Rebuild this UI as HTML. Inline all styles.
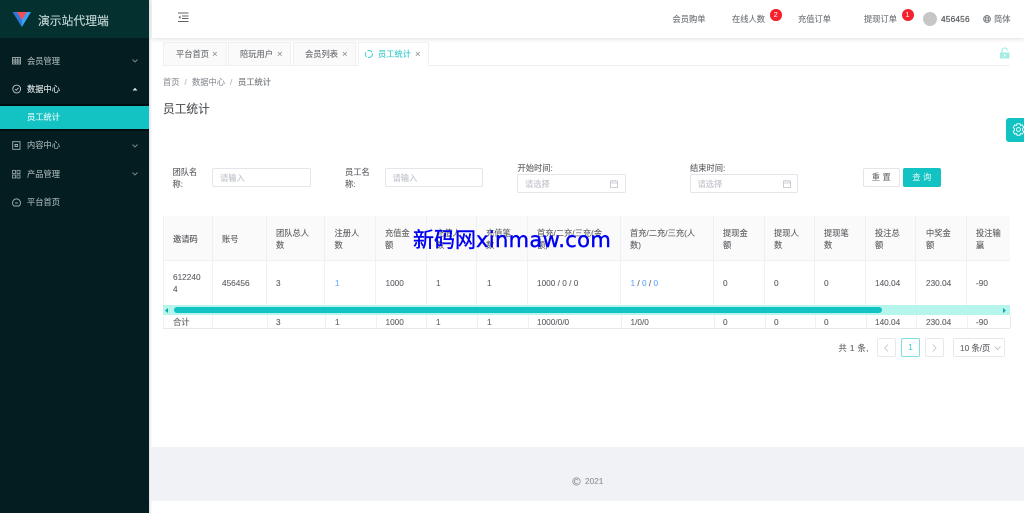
<!DOCTYPE html>
<html><head><meta charset="utf-8">
<style>
html,body{margin:0;padding:0;width:1024px;height:513px;overflow:hidden;background:#fff}
body{position:relative;font-family:"Liberation Sans","Noto Sans CJK SC",sans-serif;font-size:8.25px;color:#606266;filter:blur(.35px)}
.t{position:absolute;white-space:nowrap;line-height:12px;margin-top:.7px;-webkit-text-stroke:.12px currentColor}
.b{position:absolute;box-sizing:border-box}
.s{color:#a3b1b1}
.h{color:#909399}
.bl{color:#69a8ff}
svg{position:absolute;overflow:visible}
.l{position:absolute;background:#eef0f3;width:1px}
</style></head><body>

<!-- sidebar -->
<div class="b" style="left:0;top:0;width:149px;height:513px;background:#031d20"></div>
<div class="b" style="left:0;top:0;width:149px;height:38px;background:#04302f"></div>
<div class="b" style="left:149px;top:0;width:3px;height:513px;background:linear-gradient(90deg,#dfe2e7,#fff)"></div>
<svg style="left:12px;top:11px" width="20" height="17" viewBox="0 0 20 17"><path d="M.7 1H19L9.900 16Z" fill="#36a3f7"/><path d="M.7 1H5L9.900 9V16Z" fill="#2e78d8"/><path d="M5 1H15L9.900 9Z" fill="#ef5060"/></svg>
<div class="t" style="left:38px;top:14px;font-size:11.8px;color:#c9dbd9">演示站代理端</div>

<div class="b" style="left:0;top:104px;width:149px;height:27px;background:#000c0d"></div>
<div class="b" style="left:0;top:106px;width:149px;height:23px;background:#13c2c2"></div>

<svg style="left:12px;top:57px" width="10" height="8" viewBox="0 0 10 8" fill="none" stroke="#a3b1b1" stroke-width=".9"><rect x=".5" y=".5" width="8" height="6.5"/><path d="M.5 3H8.500M.5 5H8.500M3.200.5V7M5.800.5V7"/></svg>
<div class="t s" style="left:27px;top:55px">会员管理</div>
<svg style="left:132px;top:59px" width="6" height="4" viewBox="0 0 6 4" fill="none" stroke="#7f9090" stroke-width=".9"><path d="M.5.5L3 3L5.500.5"/></svg>

<svg style="left:12px;top:84px" width="10" height="10" viewBox="0 0 10 10" fill="none" stroke="#c5d0d0" stroke-width=".9"><circle cx="4.700" cy="5" r="3.900"/><path d="M3 5.200L4.300 6.300L6.500 3.800"/></svg>
<div class="t" style="left:27px;top:83.500px;color:#dfe6e6">数据中心</div>
<svg style="left:132px;top:87px" width="6" height="4" viewBox="0 0 6 4"><path d="M.5 3.500L3 .8L5.500 3.500Z" fill="#dfe6e6"/></svg>

<div class="t" style="left:27px;top:111.500px;color:#e6fafa">员工统计</div>

<svg style="left:12px;top:141px" width="9" height="9" viewBox="0 0 9 9" fill="none" stroke="#a3b1b1" stroke-width=".9"><rect x=".7" y=".7" width="7.300" height="7.600"/><path d="M3 3.500H5.500V5.500H3Z"/></svg>
<div class="t s" style="left:27px;top:139.500px">内容中心</div>
<svg style="left:132px;top:143.500px" width="6" height="4" viewBox="0 0 6 4" fill="none" stroke="#7f9090" stroke-width=".9"><path d="M.5.5L3 3L5.500.5"/></svg>

<svg style="left:12px;top:170px" width="9" height="9" viewBox="0 0 9 9" fill="none" stroke="#a3b1b1" stroke-width=".8"><rect x=".5" y=".5" width="3" height="3"/><rect x="5" y=".5" width="3" height="3"/><rect x=".5" y="5" width="3" height="3"/><rect x="5" y="5" width="3" height="3"/></svg>
<div class="t s" style="left:27px;top:168px">产品管理</div>
<svg style="left:132px;top:172px" width="6" height="4" viewBox="0 0 6 4" fill="none" stroke="#7f9090" stroke-width=".9"><path d="M.5.5L3 3L5.500.5"/></svg>

<svg style="left:12px;top:198px" width="10" height="9" viewBox="0 0 10 9" fill="none" stroke="#a3b1b1" stroke-width=".9"><path d="M2 8A4 4 0 1 1 7 8Z"/><path d="M3 5H6"/></svg>
<div class="t s" style="left:27px;top:196px">平台首页</div>

<!-- header -->
<div class="b" style="left:152px;top:0;width:872px;height:38px;background:#fff;box-shadow:0 1px 4px rgba(0,21,41,.14)"></div>
<svg style="left:178px;top:12px" width="11" height="11" viewBox="0 0 11 11" fill="none" stroke="#5f6367" stroke-width="1"><path d="M0 1H10.500M4 4H10.500M4 6.500H10.500M0 9.500H10.500"/><path d="M2.500 3.500L.5 5.200L2.500 7Z" fill="#5f6367" stroke="none"/></svg>
<div class="t" style="left:672.500px;top:13px;color:#707478">会员购单</div>
<div class="t" style="left:732px;top:13px;color:#707478">在线人数</div>
<div class="b" style="left:770px;top:9px;width:11.500px;height:11.500px;border-radius:50%;background:#f5222d;color:#fff;font-size:7.500px;line-height:11.500px;text-align:center">2</div>
<div class="t" style="left:798px;top:13px;color:#707478">充值订单</div>
<div class="t" style="left:864px;top:13px;color:#707478">提现订单</div>
<div class="b" style="left:901.500px;top:8.500px;width:12px;height:12px;border-radius:50%;background:#f5222d;color:#fff;font-size:7.500px;line-height:12px;text-align:center">1</div>
<div class="b" style="left:923px;top:12px;width:14px;height:14px;border-radius:50%;background:#c6c6c6"></div>
<div class="t" style="left:941px;top:13px;color:#5a5e62;letter-spacing:.2px;-webkit-text-stroke:.25px #5a5e62">456456</div>
<svg style="left:983px;top:15px" width="8" height="8" viewBox="0 0 8 8" fill="none" stroke="#707478" stroke-width=".7"><circle cx="4" cy="4" r="3.500"/><ellipse cx="4" cy="4" rx="1.600" ry="3.500"/><path d="M.5 4H7.500M1 2.300H7M1 5.700H7"/></svg>
<div class="t" style="left:994px;top:13px;color:#707478">简体</div>

<!-- tabs -->
<div class="b" style="left:163px;top:65px;width:847px;height:1px;background:#f0f0f0"></div>
<div class="b" style="left:163px;top:42px;width:64px;height:24px;background:#fafafa;border:1px solid #f0f0f0"></div>
<div class="t" style="left:176px;top:48px;color:#6a6d70">平台首页</div><div class="t h" style="left:212px;top:48px;font-size:9.500px">×</div>
<div class="b" style="left:228px;top:42px;width:63px;height:24px;background:#fafafa;border:1px solid #f0f0f0"></div>
<div class="t" style="left:240px;top:48px;color:#6a6d70">陪玩用户</div><div class="t h" style="left:277px;top:48px;font-size:9.500px">×</div>
<div class="b" style="left:293px;top:42px;width:63px;height:24px;background:#fafafa;border:1px solid #f0f0f0"></div>
<div class="t" style="left:305px;top:48px;color:#6a6d70">会员列表</div><div class="t h" style="left:342px;top:48px;font-size:9.500px">×</div>
<div class="b" style="left:358px;top:42px;width:71px;height:24px;background:#fff;border:1px solid #f0f0f0;border-bottom:0"></div>
<svg style="left:365px;top:50px" width="8" height="8" viewBox="0 0 8 8" fill="none" stroke="#3fd0d0" stroke-width="1"><path d="M1.600 6.800A3.500 3.500 0 0 1 1 2M2.500.8A3.500 3.500 0 0 1 7 2.200M7.400 3.500A3.500 3.500 0 0 1 3 7.400"/></svg>
<div class="t" style="left:378px;top:48px;color:#3bcaca">员工统计</div><div class="t h" style="left:415px;top:48px;font-size:9.500px">×</div>
<svg style="left:1000px;top:47.500px" width="9.500" height="11" viewBox="0 0 9.500 11"><rect x="0" y="4.500" width="9.500" height="6" fill="#a5ece5"/><path d="M2 4.500V3A2.700 2.700 0 0 1 7.500 2.500" fill="none" stroke="#a5ece5" stroke-width="1.200"/><rect x="4.200" y="6.500" width="1.200" height="2" fill="#fff"/></svg>

<!-- breadcrumb -->
<div class="t h" style="left:163px;top:76px">首页</div>
<div class="t" style="left:184.500px;top:76px;color:#b0b3b8">/</div>
<div class="t h" style="left:192px;top:76px">数据中心</div>
<div class="t" style="left:230px;top:76px;color:#b0b3b8">/</div>
<div class="t" style="left:238px;top:76px;color:#707478">员工统计</div>
<div class="t" style="left:163px;top:103px;font-size:11.700px;color:#4d5053">员工统计</div>

<!-- settings -->
<div class="b" style="left:1006px;top:118px;width:18px;height:24px;background:#13c2c2;border-radius:3px 0 0 3px"></div>
<svg style="left:1011.500px;top:123px" width="13" height="13" viewBox="0 0 13 13" fill="none" stroke="#e6ffff" stroke-width="1"><path d="M5 .8H8L8.500 2.500L10.300 2L11.800 4.500L10.500 5.800V7.200L11.800 8.500L10.300 11L8.500 10.500L8 12.200H5L4.500 10.500L2.700 11L1.200 8.500L2.500 7.200V5.800L1.200 4.500L2.700 2L4.500 2.500Z"/><circle cx="6.500" cy="6.500" r="2"/></svg>

<!-- form -->
<div class="t" style="left:172.500px;top:166px">团队名</div><div class="t" style="left:172.500px;top:178px">称:</div>
<div class="b" style="left:212px;top:168px;width:98.500px;height:19px;border:1px solid #e3e5e9;border-radius:2px"></div>
<div class="t" style="left:220px;top:172px;color:#c0c4cc">请输入</div>
<div class="t" style="left:345px;top:166px">员工名</div><div class="t" style="left:345px;top:178px">称:</div>
<div class="b" style="left:385px;top:168px;width:98px;height:19px;border:1px solid #e3e5e9;border-radius:2px"></div>
<div class="t" style="left:392.500px;top:172px;color:#c0c4cc">请输入</div>
<div class="t" style="left:517.500px;top:162px">开始时间:</div>
<div class="b" style="left:517px;top:174px;width:108.500px;height:19px;border:1px solid #e3e5e9;border-radius:2px"></div>
<div class="t" style="left:525px;top:178px;color:#c0c4cc">请选择</div>
<svg style="left:610px;top:180px" width="8" height="8" viewBox="0 0 8 8" fill="none" stroke="#c0c4cc" stroke-width=".8"><rect x=".5" y="1" width="7" height="6.500"/><path d="M.5 3H7.500M2.300 0V1.500M5.700 0V1.500"/></svg>
<div class="t" style="left:690px;top:162px">结束时间:</div>
<div class="b" style="left:690px;top:174px;width:108px;height:19px;border:1px solid #e3e5e9;border-radius:2px"></div>
<div class="t" style="left:697.500px;top:178px;color:#c0c4cc">请选择</div>
<svg style="left:783px;top:180px" width="8" height="8" viewBox="0 0 8 8" fill="none" stroke="#c0c4cc" stroke-width=".8"><rect x=".5" y="1" width="7" height="6.500"/><path d="M.5 3H7.500M2.300 0V1.500M5.700 0V1.500"/></svg>
<div class="b" style="left:863px;top:168px;width:37px;height:19px;border:1px solid #e3e5e9;border-radius:2px;text-align:center;line-height:17px;letter-spacing:2.500px;padding-left:2px">重置</div>
<div class="b" style="left:903px;top:168px;width:38px;height:19px;background:#13c2c2;border-radius:2px;text-align:center;line-height:19px;color:#e6fafa;letter-spacing:2.500px;padding-left:2px">查询</div>

<!-- table -->
<div class="b" style="left:163px;top:216px;width:847px;height:44.500px;background:#fafafa"></div>
<div class="b" style="left:163px;top:260px;width:847px;height:1px;background:#eef0f3"></div>
<div class="b" style="left:163px;top:216px;width:1px;height:112px;background:#eef0f3"></div>
<div class="b" style="left:163px;top:327.500px;width:847px;height:1px;background:#e6e8ec"></div>
<div class="b" style="left:1009.500px;top:315px;width:1px;height:13px;background:#e6e8ec"></div>
<div class="l" style="left:212px;top:216px;height:89px"></div>
<div class="l" style="left:266px;top:216px;height:89px"></div>
<div class="l" style="left:324px;top:216px;height:89px"></div>
<div class="l" style="left:375px;top:216px;height:89px"></div>
<div class="l" style="left:426px;top:216px;height:89px"></div>
<div class="l" style="left:476px;top:216px;height:89px"></div>
<div class="l" style="left:527px;top:216px;height:89px"></div>
<div class="l" style="left:620px;top:216px;height:89px"></div>
<div class="l" style="left:713px;top:216px;height:89px"></div>
<div class="l" style="left:764px;top:216px;height:89px"></div>
<div class="l" style="left:814px;top:216px;height:89px"></div>
<div class="l" style="left:865px;top:216px;height:89px"></div>
<div class="l" style="left:915px;top:216px;height:89px"></div>
<div class="l" style="left:966px;top:216px;height:89px"></div>
<div class="l" style="left:212px;top:315px;height:13px"></div>
<div class="l" style="left:267px;top:315px;height:13px"></div>
<div class="l" style="left:325px;top:315px;height:13px"></div>
<div class="l" style="left:376px;top:315px;height:13px"></div>
<div class="l" style="left:426px;top:315px;height:13px"></div>
<div class="l" style="left:477px;top:315px;height:13px"></div>
<div class="l" style="left:528px;top:315px;height:13px"></div>
<div class="l" style="left:621px;top:315px;height:13px"></div>
<div class="l" style="left:714px;top:315px;height:13px"></div>
<div class="l" style="left:765px;top:315px;height:13px"></div>
<div class="l" style="left:815px;top:315px;height:13px"></div>
<div class="l" style="left:866px;top:315px;height:13px"></div>
<div class="l" style="left:916px;top:315px;height:13px"></div>
<div class="l" style="left:967px;top:315px;height:13px"></div>

<div class="t" style="left:173px;top:233.500px;color:#4f5256">邀请码</div>
<div class="t" style="left:222px;top:233.500px">账号</div>
<div class="t" style="left:276px;top:227px">团队总人</div><div class="t" style="left:276px;top:239.500px">数</div>
<div class="t" style="left:334.500px;top:227px">注册人</div><div class="t" style="left:334.500px;top:239.500px">数</div>
<div class="t" style="left:385px;top:227px">充值金</div><div class="t" style="left:385px;top:239.500px">额</div>
<div class="t" style="left:436px;top:227px">充值人</div><div class="t" style="left:436px;top:239.500px">数</div>
<div class="t" style="left:486px;top:227px">充值笔</div><div class="t" style="left:486px;top:239.500px">数</div>
<div class="t" style="left:537px;top:227px">首充/二充/三充(金</div><div class="t" style="left:537px;top:239.500px">额)</div>
<div class="t" style="left:630px;top:227px">首充/二充/三充(人</div><div class="t" style="left:630px;top:239.500px">数)</div>
<div class="t" style="left:723px;top:227px">提现金</div><div class="t" style="left:723px;top:239.500px">额</div>
<div class="t" style="left:774px;top:227px">提现人</div><div class="t" style="left:774px;top:239.500px">数</div>
<div class="t" style="left:824px;top:227px">提现笔</div><div class="t" style="left:824px;top:239.500px">数</div>
<div class="t" style="left:875px;top:227px">投注总</div><div class="t" style="left:875px;top:239.500px">额</div>
<div class="t" style="left:926px;top:227px">中奖金</div><div class="t" style="left:926px;top:239.500px">额</div>
<div class="t" style="left:976px;top:227px">投注输</div><div class="t" style="left:976px;top:239.500px">赢</div>

<div class="t" style="left:173px;top:271px">612240</div><div class="t" style="left:173px;top:283.500px">4</div>
<div class="t" style="left:222px;top:277.500px">456456</div>
<div class="t" style="left:276px;top:277.500px">3</div>
<div class="t bl" style="left:335px;top:277.500px">1</div>
<div class="t" style="left:385.500px;top:277.500px">1000</div>
<div class="t" style="left:436px;top:277.500px">1</div>
<div class="t" style="left:487px;top:277.500px">1</div>
<div class="t" style="left:537px;top:277.500px">1000 / 0 / 0</div>
<div class="t" style="left:630.500px;top:277.500px"><span class="bl">1</span> / <span class="bl">0</span> / <span class="bl">0</span></div>
<div class="t" style="left:723px;top:277.500px">0</div>
<div class="t" style="left:774px;top:277.500px">0</div>
<div class="t" style="left:824px;top:277.500px">0</div>
<div class="t" style="left:875px;top:277.500px">140.04</div>
<div class="t" style="left:926px;top:277.500px">230.04</div>
<div class="t" style="left:976px;top:277.500px">-90</div>

<!-- scrollbar -->
<div class="b" style="left:163px;top:305px;width:847px;height:10px;background:#b5f5ec"></div>
<div class="b" style="left:174px;top:307px;width:708px;height:5.500px;border-radius:3px;background:#13c2c2"></div>
<svg style="left:165px;top:307.500px" width="4" height="5" viewBox="0 0 4 5"><path d="M3 0V5L0 2.500Z" fill="#13a8a8"/></svg>
<svg style="left:1003px;top:307.500px" width="4" height="5" viewBox="0 0 4 5"><path d="M0 0V5L3 2.500Z" fill="#13a8a8"/></svg>

<div class="t" style="left:173px;top:316px">合计</div>
<div class="t" style="left:276px;top:316px">3</div>
<div class="t" style="left:335px;top:316px">1</div>
<div class="t" style="left:385.500px;top:316px">1000</div>
<div class="t" style="left:436px;top:316px">1</div>
<div class="t" style="left:487px;top:316px">1</div>
<div class="t" style="left:537px;top:316px">1000/0/0</div>
<div class="t" style="left:630.500px;top:316px">1/0/0</div>
<div class="t" style="left:723px;top:316px">0</div>
<div class="t" style="left:774px;top:316px">0</div>
<div class="t" style="left:824px;top:316px">0</div>
<div class="t" style="left:875px;top:316px">140.04</div>
<div class="t" style="left:926px;top:316px">230.04</div>
<div class="t" style="left:976px;top:316px">-90</div>

<!-- watermark -->
<div class="t" style="left:413px;top:227.500px;line-height:24px;font-size:21px;color:#0000f0;-webkit-text-stroke:.4px #0000f0;font-family:'DejaVu Sans','Noto Sans CJK SC',sans-serif">新码网<span style="letter-spacing:.35px">xinmaw.com</span></div>

<!-- pagination -->
<div class="t" style="left:838.500px;top:342px;letter-spacing:.4px">共 1 条,</div>
<div class="b" style="left:877px;top:338px;width:19px;height:19px;border:1px solid #e6e8ec;border-radius:2px"></div>
<svg style="left:884px;top:344px" width="5" height="8" viewBox="0 0 5 8" fill="none" stroke="#c0c4cc" stroke-width=".9"><path d="M4 .5L.8 4L4 7.500"/></svg>
<div class="b" style="left:901px;top:338px;width:19px;height:19px;border:1px solid #7fdede;border-radius:2px;text-align:center;line-height:17px;color:#3bcaca">1</div>
<div class="b" style="left:924.500px;top:338px;width:19px;height:19px;border:1px solid #e6e8ec;border-radius:2px"></div>
<svg style="left:932px;top:344px" width="5" height="8" viewBox="0 0 5 8" fill="none" stroke="#c0c4cc" stroke-width=".9"><path d="M.8 .5L4 4L.8 7.500"/></svg>
<div class="b" style="left:953px;top:338px;width:52px;height:19px;border:1px solid #e6e8ec;border-radius:2px"></div>
<div class="t" style="left:960px;top:342px">10 条/页</div>
<svg style="left:993.500px;top:346px" width="7" height="4" viewBox="0 0 7 4" fill="none" stroke="#b5b8bd" stroke-width=".8"><path d="M.5 .5L3.500 3.500L6.500 .5"/></svg>

<!-- footer -->
<div class="b" style="left:150px;top:447px;width:874px;height:54px;background:#f0f2f5"></div>
<svg style="left:572px;top:476.500px" width="9" height="9" viewBox="0 0 9 9" fill="none" stroke="#8c8f94" stroke-width=".8"><circle cx="4.500" cy="4.500" r="3.700"/><path d="M5.900 3.300A2 2 0 1 0 5.900 5.700"/></svg>
<div class="t h" style="left:585px;top:475px">2021</div>

</body></html>
